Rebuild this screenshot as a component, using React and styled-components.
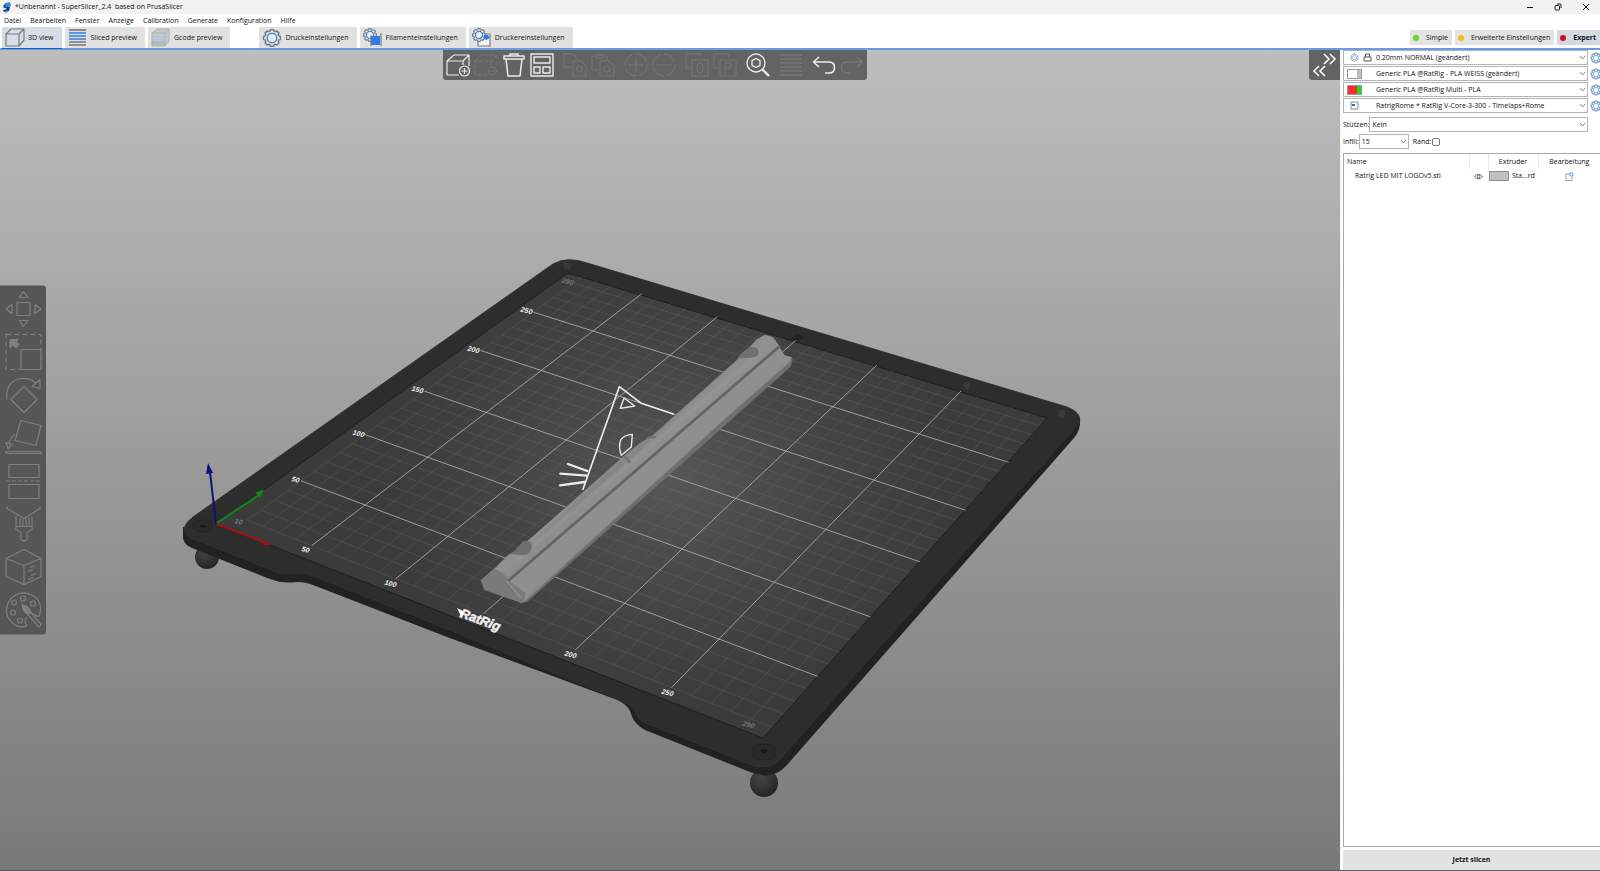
import React from "react";
import styled, { createGlobalStyle, css } from "styled-components";

const GlobalStyle = createGlobalStyle`
  * { box-sizing: border-box; }
  html, body { margin: 0; padding: 0; background: #fff; }
  body, button, select, input, table {
    font-family: "Open Sans", "Noto Sans", sans-serif;
    font-size: 7px;
    line-height: 12px;
    color: #111;
  }
  button { border: 0; background: none; padding: 0; margin: 0; }
`;

/* ---------- page frame ---------- */

const Window = styled.div`
  display: flex;
  flex-direction: column;
  min-height: 100vh;
  overflow: hidden;
  border-bottom: 1px solid #5a5a5a;
`;

const TitleBar = styled.header`
  display: flex;
  align-items: center;
  height: 14px;
  padding-left: 2px;
  background: #f2f2f2;
`;

const Title = styled.h1`
  flex: 1;
  margin: 0 0 0 4px;
  font-size: 7px;
  font-weight: 400;
  line-height: 12px;
  white-space: pre;
`;

const WindowButton = styled.button`
  display: flex;
  align-items: center;
  justify-content: center;
  width: 28px;
  height: 14px;
`;

const MenuBar = styled.nav`
  display: flex;
  gap: 9px;
  height: 13px;
  padding-left: 4px;
  align-items: center;
`;

const MenuButton = styled.button`
  line-height: 12px;
`;

const TabBar = styled.div`
  display: flex;
  align-items: stretch;
  justify-content: space-between;
  height: 23px;
  padding-left: 2px;
  border-bottom: 2px solid #6a9be0;
`;

const TabGroup = styled.div`
  display: flex;
  gap: 3px;
  & + & { margin-left: 29px; }
`;

const TabSet = styled.div`
  display: flex;
`;

const Tab = styled.button`
  display: flex;
  align-items: center;
  gap: 3px;
  padding: 0 8px 0 3px;
  background: #e1e1e1;
  white-space: nowrap;
  ${(p) => p.$active && css`
    background: #d7dde7;
    box-shadow: 0 1px 0 #1b62c4;
  `}
`;

const ModeGroup = styled.div`
  display: flex;
  align-items: center;
  gap: 3px;
`;

const ModeButton = styled.button`
  display: flex;
  align-items: center;
  gap: 7px;
  height: 15px;
  padding: 0 4px 0 3px;
  background: ${(p) => (p.$active ? "#d3d9e3" : "#e3e3e3")};
  font-weight: ${(p) => (p.$active ? 700 : 400)};
  white-space: nowrap;
`;

const Dot = styled.span`
  width: 6px;
  height: 6px;
  border-radius: 50%;
  background: ${(p) => p.$color};
`;

const Main = styled.main`
  display: flex;
  flex: 1;
`;

/* ---------- 3D viewport ---------- */

const Viewport = styled.section`
  position: relative;
  flex: 1;
  min-width: 0;
  background: linear-gradient(#bdbdbd, #797979);
`;

const SceneSvg = styled.svg`
  position: absolute;
  inset: 0;
  width: 100%;
  height: 100%;
`;

const TopOverlay = styled.div`
  position: relative;
  display: flex;
  align-items: flex-start;
`;

const ToolbarSlot = styled.div`
  flex: 1;
  display: flex;
  justify-content: center;
`;

const Toolbar = styled.div`
  display: flex;
  gap: 5px;
  height: 30px;
  padding: 0 1px;
  border-radius: 0 0 3px 3px;
  background: #636363;
`;

const ToolGroup = styled.div`
  display: flex;
`;

const ToolButton = styled.button`
  display: flex;
  align-items: center;
  justify-content: center;
  width: 28px;
  height: 30px;
  color: ${(p) => (p.disabled ? "#777" : "#ececec")};
`;

const CollapseButton = styled.button`
  width: 31px;
  height: 30px;
  border-radius: 0 0 0 3px;
  background: #636363;
  color: #fff;
`;

const GizmoBar = styled.div`
  position: absolute;
  left: 0;
  top: 50%;
  transform: translateY(-50%);
  display: flex;
  flex-direction: column;
  padding: 2px 0 3px;
  border-radius: 0 3px 3px 0;
  background: #565656;
`;

const GizmoButton = styled.button`
  display: flex;
  align-items: center;
  justify-content: center;
  width: 46px;
  height: 43px;
  color: #808080;
`;

/* ---------- sidebar ---------- */

const Sidebar = styled.aside`
  display: flex;
  flex-direction: column;
  flex: none;
  width: 260px;
  padding-left: 2px;
  border-left: 1px solid #f4f4f4;
  background: #fff;
`;

const PresetList = styled.div`
  display: flex;
  flex-direction: column;
  gap: 1px;
`;

const PresetRow = styled.div`
  display: flex;
  align-items: center;
  gap: 2px;
  overflow: hidden;
`;

const Combo = styled.div`
  position: relative;
  width: ${(p) => (p.$width ? p.$width + "px" : "auto")};
  flex: ${(p) => (p.$width ? "none" : "1")};
`;

const Select = styled.select`
  display: block;
  appearance: none;
  width: 100%;
  height: 15px;
  margin: 0;
  padding: 0 12px 0 ${(p) => p.$indent || 2}px;
  border: 1px solid #b4b4b4;
  border-radius: 0;
  background: #fff;
`;

const ComboArrow = styled.svg`
  position: absolute;
  right: 2px;
  top: 5px;
  pointer-events: none;
`;

const ComboMark = styled.span`
  position: absolute;
  left: 4px;
  top: 0;
  display: flex;
  align-items: center;
  gap: 4px;
  height: 15px;
  padding-left: ${(p) => (p.$inset ? 3 : 0)}px;
  pointer-events: none;
`;

const Swatch = styled.span`
  display: block;
  width: 15px;
  height: 10px;
  border: 1px solid #9a9a9a;
  background: linear-gradient(90deg, ${(p) => p.$left} 66%, ${(p) => p.$right} 66%);
`;

const GearButton = styled.button`
  flex: none;
  width: 10px;
  height: 12px;
  overflow: hidden;
  svg { display: block; }
`;

const Options = styled.div`
  display: flex;
  flex-direction: column;
  gap: 2px;
  margin: 4px 12px 4px 0;
`;

const OptionRow = styled.div`
  display: flex;
  align-items: center;
`;

const Label = styled.label`
  white-space: nowrap;
  ${(p) => p.$spaced && css`margin-left: 4px;`}
`;

const CheckBox = styled.input`
  appearance: none;
  width: 8px;
  height: 8px;
  margin: 0 0 0 1px;
  border: 1px solid #777;
  border-radius: 2px;
  background: #fff;
`;

const ObjectPanel = styled.div`
  flex: 1;
  border: 1px solid #a8a8a8;
  border-right: 0;
`;

const ObjectTable = styled.table`
  width: 100%;
  table-layout: fixed;
  border-collapse: collapse;
  th { height: 15px; padding: 0 3px; font-weight: 400; text-align: center; border-right: 1px solid #e8e8e8; }
  th:first-child { text-align: left; }
  th:last-child { border-right: 0; padding: 0; }
  td { height: 14px; padding: 0; text-align: center; white-space: nowrap; }
  td:first-child { padding-left: 11px; text-align: left; }
  svg { display: inline-block; vertical-align: middle; }
`;

const Col = styled.col`
  width: ${(p) => p.$width}px;
`;

const ExtruderCell = styled.div`
  display: flex;
  align-items: center;
  gap: 3px;
  padding-left: 1px;
`;

const ExtruderSwatch = styled.span`
  width: 20px;
  height: 10px;
  border: 1px solid #909090;
  background: #c0c0c0;
`;

const SliceButton = styled.button`
  height: 20px;
  margin-top: 3px;
  background: #e2e2e2;
  font-weight: 700;
`;

/* ---------- icons ---------- */

const Svg = ({ size = 24, box = 24, w = 1, children }) => (
  <svg width={size} height={size} viewBox={`0 0 ${box} ${box}`} fill="none" stroke="currentColor" strokeWidth={w} strokeLinejoin="round" aria-hidden="true">
    {children}
  </svg>
);

const gearPath = (c, r, teeth) => {
  const pts = [];
  for (let i = 0; i < teeth; i++) {
    [[-0.5, 0.82], [-0.28, 1], [0.28, 1], [0.5, 0.82]].forEach(([o, k]) => {
      const a = ((i + o * 0.8) / teeth) * Math.PI * 2;
      pts.push(`${(c + Math.cos(a) * r * k).toFixed(2)} ${(c + Math.sin(a) * r * k).toFixed(2)}`);
    });
  }
  return "M" + pts.join("L") + "Z";
};

const Gear = ({ c, r }) => (
  <>
    <path d={gearPath(c, r, 8)} stroke="#7b7b7b" fill="#eee" />
    <circle cx={c} cy={c} r={r * 0.56} stroke="#3d84e8" strokeWidth="1.4" />
  </>
);

const SmallGear = ({ size = 12 }) => (
  <Svg size={size} box={12} w={1.2}>
    <path d={gearPath(6, 5, 8)} stroke="#7f9cba" />
    <circle cx="6" cy="6" r="2.6" stroke="#8db8ee" />
  </Svg>
);

const tabIcons = {
  cube: (
    <Svg size={20} box={20} w={1.2}>
      <g stroke="#7a7a7a"><path d="M1 6H14V18H1ZM1 6L6 1H19L14 6M19 1V12L14 18" /></g>
    </Svg>
  ),
  layers: (
    <Svg size={20} box={20} w={1.6}>
      <path d="M1 2H18" stroke="#777" />
      <path d="M1 5H18M1 8H18M1 11H18" stroke="#2f7bea" />
      <path d="M1 14H18M1 17H18" stroke="#777" />
    </Svg>
  ),
  gcode: (
    <Svg size={20} box={20} w={1}>
      <path d="M1 5L6 1H18V13L14 18H1Z" fill="#c9c9c9" stroke="#b0b0b0" />
      <path d="M1 5H14V18M14 5L18 1" stroke="#b0b0b0" />
      <path d="M1 8.500H14L18 4M1 11H14L18 7" stroke="#a9c4ec" />
      <path d="M1 14H14M1 16H14" stroke="#a4a4a4" />
    </Svg>
  ),
  print: <Svg size={20} box={20} w={1.5}><Gear c={10} r={8.500} /></Svg>,
  filament: (
    <Svg size={20} box={20} w={1.2}>
      <Gear c={7} r={6.500} />
      <path d="M8 8H17V17H8Z" fill="#2f7bea" stroke="none" />
      <path d="M8 7V18M18 5V18" stroke="#7a7a7a" />
    </Svg>
  ),
  printer: (
    <Svg size={20} box={20} w={1.2}>
      <path d="M6 6H18V18H6Z" stroke="#7a7a7a" fill="#f3f3f3" />
      <Gear c={7} r={6.500} />
      <path d="M12 7H16L18 10L14 12L12 10Z" fill="#2f7bea" stroke="none" />
    </Svg>
  ),
};

const toolIcons = {
  add: <Svg w={1.2}><path d="M13 22H1V8H17V12M1 8L8 2H23L17 8M23 2V13" /><circle cx="18.500" cy="18" r="5" /><path d="M18.500 15V21M15.500 18H21.500" /></Svg>,
  remove: <Svg><g strokeDasharray="4 2"><path d="M13 22H1V8H17V12M1 8L8 2H23L17 8M23 2V13" /></g><circle cx="18.500" cy="18" r="4" /><path d="M16 18H21" /></Svg>,
  trash: <Svg w={1.5}><path d="M2 3H22V6H2ZM8 3V1H16V3M4 6L6 23H18L20 6" /></Svg>,
  arrange: <Svg w={1.400}><path d="M1 1H23V23H1ZM4 4H20V10H4ZM4 14H10V20H4ZM13 14H20V20H13Z" /></Svg>,
  copy: <Svg><path d="M8 14H1V1H10L13 4V7M10 8H18L23 13V23H10Z" /><circle cx="16.500" cy="16" r="3" /></Svg>,
  paste: <Svg><path d="M8 17H1V3H5M12 3H16V7M5 2H12V5H5ZM9 8H18L23 13V23H9Z" /><circle cx="16" cy="16" r="3" /></Svg>,
  plus: <Svg><circle cx="12" cy="12" r="11" strokeDasharray="14 3" /><path d="M12 5V19M5 12H19" /></Svg>,
  minus: <Svg><circle cx="12" cy="12" r="11" strokeDasharray="14 3" /><path d="M5 12H19" /></Svg>,
  splitO: <Svg><path d="M5 15H1V1H16V5M7 7H23V23H7Z" /><rect x="12" y="10" width="6" height="10" rx="3" /></Svg>,
  splitP: <Svg><path d="M5 15H1V1H16V5M7 7H23V23H7Z" /><path d="M12 20V10H16Q18 10 18 13Q18 15 16 15H12" /></Svg>,
  search: <Svg w={1.400}><circle cx="10" cy="10" r="9" /><path d="M10 5.500L14 7.700V12.300L10 14.500L6 12.300V7.700Z" /><path d="M16.500 16.500L23 23" strokeWidth="2.400" /></Svg>,
  lines: <Svg w={1.500}><path d="M1 2H23M1 6H23M1 10H23M1 14H23M1 18H23M1 22H23" /></Svg>,
  undo: <Svg w={1.600}><path d="M7 4L1.500 9L7 14M2 9H17Q22.500 9 22.500 14.500Q22.500 20 17 20H13" /></Svg>,
  redo: <Svg w={1.300}><path d="M17 4L22.500 9L17 14M22 9H7Q1.500 9 1.500 14.500Q1.500 20 7 20H11" /></Svg>,
};

const gizmoIcons = [
  ["Move", <><path d="M12 12H25V25H12ZM14 7H23L18.500 1ZM14 30H23L18.500 36ZM7 14V23L1 18.500ZM30 14V23L36 18.500Z" /></>],
  ["Scale", <><path d="M1 1H36V36H1Z" strokeDasharray="5 3" /><path d="M16 16H36V36H16Z" fill="#565656" /><path d="M5 6H13L11 8L14 11L11 14L8 11L5 14Z" fill="currentColor" /></>],
  ["Rotate", <><path d="M19 10L32 23L19 36L6 23ZM2 23Q0 5 16 2Q26 1 31 7M35 3V12L27 10Z" /></>],
  ["Place on face", <><path d="M16 1L36 6L31 26L10 21ZM10 15Q5 18 4 24M1 23L7 25L3 29Z" /><path d="M1 32H36V34H1Z" /></>],
  ["Cut", <><path d="M4 2H34V15H4ZM4 22H34V36H4Z" /><path d="M1 18.500H36" strokeDasharray="4 2" /></>],
  ["Paint supports", <><path d="M2 1V3L19 13L35 3V1M11 11V24L16 27V34Q19 37 22 34V27L27 24V11M11 21H27M15 13V21M18 14V21M21 13V21M24 12V21" /></>],
  ["Seam", <><path d="M19 1L36 10V28L19 36L1 28V10ZM1 10L19 17L36 10M19 17V36M25 19L30 17M23 23L28 21M26 27L31 25M23 31L28 29" /></>],
  ["Color paint", <><path d="M34 25Q39 11 28 4Q15-3 5 8Q-3 21 7 31Q15 38 22 34Q18 29 22 26M34 25Q31 25 29 22" /><circle cx="9" cy="11" r="2.500" /><circle cx="18" cy="7" r="2.500" /><circle cx="28" cy="12" r="2.500" /><circle cx="8" cy="21" r="2.500" /><circle cx="15" cy="29" r="2.500" /><path d="M17 13Q25 15 26 21L23 23Q18 21 17 13Z" fill="currentColor" /><path d="M26 21L36 33L34 36L23 23" /></>],
];

/* ---------- scene ---------- */

/* Perspective of the 300 mm bed, fixed by four grid crossings. */
const solveHomography = (pairs) => {
  const m = [];
  pairs.forEach(([x, y, u, v]) => {
    m.push([x, y, 1, 0, 0, 0, -u * x, -u * y, u]);
    m.push([0, 0, 0, x, y, 1, -v * x, -v * y, v]);
  });
  for (let i = 0; i < 8; i++) {
    let p = i;
    for (let r = i + 1; r < 8; r++) if (Math.abs(m[r][i]) > Math.abs(m[p][i])) p = r;
    [m[i], m[p]] = [m[p], m[i]];
    for (let r = 0; r < 8; r++) {
      if (r === i) continue;
      const f = m[r][i] / m[i][i];
      for (let c = i; c < 9; c++) m[r][c] -= f * m[i][c];
    }
  }
  return m.map((row, i) => row[8] / row[i]);
};

const H = solveHomography([
  [50, 50, 365, 505],
  [250, 50, 719, 639],
  [250, 250, 919, 434],
  [50, 250, 593, 331],
]);

const project = (x, y) => {
  const w = H[6] * x + H[7] * y + 1;
  return `${((H[0] * x + H[1] * y + H[2]) / w).toFixed(1)} ${((H[3] * x + H[4] * y + H[5]) / w).toFixed(1)}`;
};

const gridPath = (major) => {
  let d = "";
  for (let v = 10; v <= 290; v += 10) {
    if ((v % 50 === 0) !== major) continue;
    d += `M${project(v, 10)}L${project(v, 300)}M${project(10, v)}L${project(300, v)}`;
  }
  return d;
};

const PlateLabel = styled.text`
  font: italic 700 ${(p) => p.$size || 7}px "Liberation Sans", sans-serif;
  fill: ${(p) => (p.$dim ? "#777" : "#f0f0f0")};
  text-anchor: middle;
`;

const plateLabels = [
  ["50", 295, 482], ["100", 358, 436], ["150", 417, 392], ["200", 473, 352], ["250", 526, 313],
  ["290", 567, 284, true], ["10", 238, 524, true], ["50", 305, 552], ["100", 390, 586],
  ["200", 570, 657], ["250", 667, 695], ["290", 748, 727, true],
];

const Scene = () => (
  <SceneSvg viewBox="0 50 1340 820" preserveAspectRatio="xMidYMid slice" role="img" aria-label="Print bed">
    <defs>
      <radialGradient id="plate" gradientUnits="userSpaceOnUse" cx="670" cy="480" r="290" gradientTransform="matrix(1 0 0 .8 0 96)">
        <stop offset="0" stopColor="#565656" />
        <stop offset=".5" stopColor="#464646" />
        <stop offset="1" stopColor="#3b3b3b" />
      </radialGradient>
      <radialGradient id="foot" cx=".4" cy=".3" r=".7">
        <stop offset="0" stopColor="#454545" />
        <stop offset="1" stopColor="#252525" />
      </radialGradient>
      <linearGradient id="bar" gradientUnits="userSpaceOnUse" x1="590" y1="460" x2="618" y2="488">
        <stop offset="0" stopColor="#7f7f7f" />
        <stop offset=".35" stopColor="#929292" />
        <stop offset=".6" stopColor="#858585" />
        <stop offset="1" stopColor="#8c8c8c" />
      </linearGradient>
    </defs>
    <circle cx="207" cy="557" r="12" fill="url(#foot)" />
    <circle cx="764" cy="783" r="14" fill="url(#foot)" />
    <path fill="#222" d="M183 527V538Q184 545 192 548L270 579Q283 584 297 582Q306 582 313 585L447 637L612 698Q629 704 631 714Q634 724 645 730L750 772Q772 781 786 766L1074 438Q1081 430 1080 418L1000 410L300 520Z" />
    <path fill="#2d2d2d" stroke="#323232" d="M193 517L553 264Q567 256 587 263L1067 407Q1087 415 1075 428L782 757Q773 770 755 766L648 724Q638 720 635 712Q632 705 622 701L447 629L316 577Q306 572 295 573Q284 575 276 572L191 538Q177 529 193 517Z" />
    <g stroke="#232323" fill="#2a2a2a">
      <ellipse cx="203" cy="526" rx="10" ry="6" />
      <ellipse cx="764" cy="752" rx="12" ry="8" />
    </g>
    <ellipse cx="203" cy="526" rx="3" ry="1.500" fill="#191919" />
    <ellipse cx="764" cy="751" rx="3" ry="2" fill="#191919" />
    <path d="M563 262L572 264L570 270L564 268ZM964 382L971 383L968 390L964 390ZM1060 410L1066 410L1064 418L1058 417Z" fill="#3a3a3a" />
    <path d="M796 334L804 336L800 341L792 339Z" fill="#242424" />
    <path d="M216 524L568 273L1047 418L763 738Z" fill="url(#plate)" stroke="#1e1e1e" />
    <path d={gridPath(false)} stroke="#808080" strokeOpacity=".22" strokeWidth="1" fill="none" />
    <path d={gridPath(true)} stroke="#b4b4b4" strokeOpacity=".8" strokeWidth="1" fill="none" />

    {plateLabels.map(([t, x, y, dim]) => (
      <PlateLabel key={`${t}-${x}`} $dim={dim} transform={`translate(${x} ${y}) rotate(14)`}>{t}</PlateLabel>
    ))}
    <PlateLabel $size={13} stroke="#f0f0f0" strokeWidth=".5" transform="translate(479 624) rotate(20)">RatRig</PlateLabel>
    <path d="M457 608L463 611L462 619L459 612Z" fill="#fff" />

    <g transform="translate(440 320) scale(.33333)" fill="none" stroke="#ececec" strokeLinecap="round" strokeLinejoin="round">
      <path strokeWidth="5" d="M429 508L538 200L604 250L700 282" />
      <path strokeWidth="4" d="M552 234L584 258L541 265ZM577 343L574 381L544 406Q534 378 543 358Q556 344 577 343Z" />
      <path strokeWidth="7" d="M384 432L442 453M361 461L440 467M360 496L434 486" />
      <g stroke="none">
        <path fill="#6f6f6f" d="M240 850L262 845L1052 140L1058 118L1015 95L230 800Z" />
        <path fill="url(#bar)" transform="translate(-1320 -960) scale(3)" d="M481 581L494 569L508 555L512 553L531 538L625 455L640 443L653 435L740 357L757 339L765 335L773 337L778 344L785 356L792 357L790 362L716 427L524 602L487 590Z" />
        <path fill="#8f8f8f" d="M207 782L1015 84L1032 104L1054 113L250 838Z" />
        <path fill="#929292" d="M165 746Q190 750 204 775L1008 78L992 50L972 44L950 62L905 112L640 358L275 672L205 712Z" opacity=".6" />
        <path stroke="#999" strokeWidth="12" opacity=".4" d="M230 722L945 110" />
        <path stroke="#646464" strokeWidth="8" d="M207 781L1014 83" />
        <path fill="#7a7a7a" d="M122 780L160 748Q184 748 204 781L258 820L248 850L133 810Z" />
        <path stroke="#939393" strokeWidth="4" d="M202 785L242 833" />
        <path fill="#707070" d="M220 696L250 663Q278 660 276 682Q272 704 250 706L205 703ZM906 98L930 80Q957 80 957 98Q950 115 928 113L892 115Z" />
        <path stroke="#6f6f6f" strokeWidth="7" d="M556 411L568 426M622 354Q636 348 644 352" />
      </g>
    </g>

    <g strokeWidth="2" fill="none">
      <path d="M216 524L210 472" stroke="#10107c" />
      <path d="M208 463L213 473L206 474Z" fill="#10107c" stroke="none" />
      <path d="M217 523L259 495" stroke="#128a18" />
      <path d="M262 491L260 496L257 493Z" fill="#128a18" stroke="#128a18" />
      <path d="M217 524L266 543" stroke="#a01414" />
      <path d="M271 545L263 545L265 540Z" fill="#a01414" stroke="none" />
    </g>
  </SceneSvg>
);

/* ---------- composed parts ---------- */

const menus = ["Datei", "Bearbeiten", "Fenster", "Anzeige", "Calibration", "Generate", "Konfiguration", "Hilfe"];

const viewTabs = [["3D view", "cube"], ["Sliced preview", "layers"], ["Gcode preview", "gcode"]];
const settingTabs = [["Druckeinstellungen", "print"], ["Filamenteinstellungen", "filament"], ["Druckereinstellungen", "printer"]];

const toolGroups = [
  [["add"], ["remove", 1], ["trash"], ["arrange"]],
  [["copy", 1], ["paste", 1]],
  [["plus", 1], ["minus", 1]],
  [["splitO", 1], ["splitP", 1]],
  [["search"]],
  [["lines", 1]],
  [["undo"], ["redo", 1]],
];

const presets = [
  {
    name: "Druckprofil", value: "0.20mm NORMAL (geändert)", inset: true,
    mark: <><SmallGear size={9} /><Svg size={9} box={9} w={1}><path d="M1 4H8V8H1ZM2.500 4V1H6.500V4" stroke="#555" /></Svg></>,
  },
  { name: "Filament 1", value: "Generic PLA @RatRig - PLA WEISS (geändert)", mark: <Swatch $left="#fff" $right="#c0c0c0" /> },
  { name: "Filament 2", value: "Generic PLA @RatRig Multi - PLA", mark: <Swatch $left="#f82c2c" $right="#18e018" /> },
  {
    name: "Drucker", value: "RatrigRome * RatRig V-Core-3-300 - Timelaps+Rome", inset: true,
    mark: <Svg size={9} box={9}><path d="M1 1H8V8H1Z" stroke="#888" /><path d="M2 3H5V5H2Z" fill="#2f6fd0" stroke="none" /></Svg>,
  },
];

const ComboBox = ({ id, label, value, indent, width, children }) => (
  <Combo $width={width}>
    <Select id={id} aria-label={label} $indent={indent} defaultValue={value}>
      <option>{value}</option>
    </Select>
    {children}
    <ComboArrow width="7" height="5" viewBox="0 0 7 5" fill="none" stroke="#666" strokeWidth=".8"><path d="M1 1L3.500 4L6 1" /></ComboArrow>
  </Combo>
);

const TabButton = ({ label, icon, active }) => (
  <Tab $active={active}>{tabIcons[icon]}{label}</Tab>
);

export default function App() {
  return (
    <Window>
      <GlobalStyle />
      <TitleBar>
        <svg width="9" height="11" viewBox="0 0 9 11" aria-hidden="true">
          <path d="M4 1L8 0L9 4L5 6L1 6Z" fill="#2b8ae6" /><path d="M1 4L4 1L3 5L8 5L7 9L2 10L1 8L5 7Z" fill="#153a66" /><path d="M2 9L7 8L4 11Z" fill="#2b8ae6" />
        </svg>
        <Title>{"*Unbenannt - SuperSlicer_2.4  based on PrusaSlicer"}</Title>
        <WindowButton aria-label="Minimieren"><Svg size={8} box={8}><path d="M1 4.500H7" /></Svg></WindowButton>
        <WindowButton aria-label="Wiederherstellen"><Svg size={8} box={8}><rect x="1" y="2.500" width="4.500" height="4.500" rx="1" /><path d="M3 1H6Q7 1 7 2V5" /></Svg></WindowButton>
        <WindowButton aria-label="Schließen"><Svg size={8} box={8}><path d="M1 1L7 7M7 1L1 7" /></Svg></WindowButton>
      </TitleBar>
      <MenuBar>
        {menus.map((m) => <MenuButton key={m}>{m}</MenuButton>)}
      </MenuBar>
      <TabBar>
        <TabSet>
          <TabGroup>
            {viewTabs.map(([l, i]) => <TabButton key={l} label={l} icon={i} active={i === "cube"} />)}
          </TabGroup>
          <TabGroup>
            {settingTabs.map(([l, i]) => <TabButton key={l} label={l} icon={i} />)}
          </TabGroup>
        </TabSet>
        <ModeGroup>
          <ModeButton><Dot $color="#62d62c" />Simple</ModeButton>
          <ModeButton><Dot $color="#f2c01a" />Erweiterte Einstellungen</ModeButton>
          <ModeButton $active><Dot $color="#d4090f" />Expert</ModeButton>
        </ModeGroup>
      </TabBar>
      <Main>
        <Viewport>
          <Scene />
          <TopOverlay>
            <ToolbarSlot>
              <Toolbar>
                {toolGroups.map((g) => (
                  <ToolGroup key={g[0][0]}>
                    {g.map(([n, off]) => <ToolButton key={n} aria-label={n} disabled={!!off}>{toolIcons[n]}</ToolButton>)}
                  </ToolGroup>
                ))}
              </Toolbar>
            </ToolbarSlot>
            <CollapseButton aria-label="Seitenleiste einklappen">
              <svg width="31" height="30" viewBox="0 0 31 30" fill="none" stroke="currentColor" strokeWidth="1.600">
                <path d="M15 4L20 9L15 14M21 4L26 9L21 14M10 16L5 21L10 26M16 16L11 21L16 26" />
              </svg>
            </CollapseButton>
          </TopOverlay>
          <GizmoBar>
            {gizmoIcons.map(([n, art]) => (
              <GizmoButton key={n} aria-label={n} disabled><Svg size={37} box={37} w={1.200}>{art}</Svg></GizmoButton>
            ))}
          </GizmoBar>
        </Viewport>
        <Sidebar>
          <PresetList>
            {presets.map((p) => (
              <PresetRow key={p.name}>
                <ComboBox label={p.name} value={p.value} indent={32}>
                  <ComboMark $inset={p.inset}>{p.mark}</ComboMark>
                </ComboBox>
                <GearButton aria-label={`${p.name} bearbeiten`}><SmallGear /></GearButton>
              </PresetRow>
            ))}
          </PresetList>
          <Options>
            <OptionRow>
              <Label htmlFor="supports">Stützen:</Label>
              <ComboBox id="supports" value="Kein" />
            </OptionRow>
            <OptionRow>
              <Label htmlFor="infill">Infill:</Label>
              <ComboBox id="infill" value="15" width={50} />
              <Label htmlFor="brim" $spaced>Rand:</Label>
              <CheckBox id="brim" type="checkbox" />
            </OptionRow>
          </Options>
          <ObjectPanel>
            <ObjectTable>
              <colgroup><Col $width={125} /><Col $width={19} /><Col $width={50} /><col /></colgroup>
              <thead>
                <tr><th>Name</th><th aria-label="Sichtbar" /><th>Extruder</th><th>Bearbeitung</th></tr>
              </thead>
              <tbody>
                <tr>
                  <td>Ratrig LED MIT LOGOv5.stl</td>
                  <td><Svg size={9} box={9} w={0.9}><path d="M.5 4.500Q4.500 0 8.500 4.500Q4.500 9 .5 4.500Z" stroke="#555" /><circle cx="4.500" cy="4.500" r="1.300" stroke="#555" /></Svg></td>
                  <td><ExtruderCell><ExtruderSwatch />Sta...rd</ExtruderCell></td>
                  <td><Svg size={9} box={9} w={0.9}><path d="M5 2H1V8.500H7V5" stroke="#999" /><circle cx="6.500" cy="2.500" r="1.700" stroke="#2f7bea" /></Svg></td>
                </tr>
              </tbody>
            </ObjectTable>
          </ObjectPanel>
          <SliceButton>Jetzt slicen</SliceButton>
        </Sidebar>
      </Main>
    </Window>
  );
}
